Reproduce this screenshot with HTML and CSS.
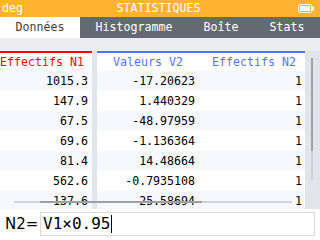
FILE: index.html
```html
<!DOCTYPE html>
<html>
<head>
<meta charset="utf-8">
<link rel="stylesheet" href="styles.css">
</head>
<body>
<div class="screen">
  <header class="topbar">
    <span class="angle">deg</span>
    <span class="title">STATISTIQUES</span>
    <span class="battery">
      <svg width="17" height="9" viewBox="0 0 17 9">
        <rect x="0.5" y="0.5" width="13" height="8" rx="1.5" fill="none" stroke="#fff"/>
        <rect x="2" y="2" width="10" height="5" fill="#fff"/>
        <rect x="14" y="2.5" width="2" height="4" fill="#fff"/>
      </svg>
    </span>
  </header>
  <nav class="tabs">
    <div class="tab tab-data active">Données</div>
    <div class="tab tab-histo">Histogramme</div>
    <div class="tab tab-box">Boîte</div>
    <div class="tab tab-stats">Stats</div>
  </nav>
  <main class="table-area">
    <div class="grid">
      <div class="col col1">
        <div class="head red">Effectifs N1</div>
        <div class="cell t">1015.3</div>
        <div class="cell">147.9</div>
        <div class="cell t">67.5</div>
        <div class="cell">69.6</div>
        <div class="cell t">81.4</div>
        <div class="cell">562.6</div>
        <div class="cell t">137.6</div>
      </div>
      <div class="sep"></div>
      <div class="group blue">
        <div class="col col2">
          <div class="head">Valeurs V2</div>
          <div class="cell t">-17.20623</div>
          <div class="cell">1.440329</div>
          <div class="cell t">-48.97959</div>
          <div class="cell">-1.136364</div>
          <div class="cell t">14.48664</div>
          <div class="cell">-0.7935108</div>
          <div class="cell t">25.58694</div>
        </div>
        <div class="col col3">
          <div class="head">Effectifs N2</div>
          <div class="cell t">1</div>
          <div class="cell">1</div>
          <div class="cell t">1</div>
          <div class="cell">1</div>
          <div class="cell t">1</div>
          <div class="cell">1</div>
          <div class="cell t">1</div>
        </div>
      </div>
      <div class="vscroll"><div class="vtrack"><div class="vthumb"></div></div></div>
    </div>
    <div class="hscroll"><div class="hthumb"></div></div>
  </main>
  <footer class="input-bar">
    <span class="label">N2=</span>
    <div class="field">V1×0.95<span class="caret"></span></div>
  </footer>
</div>
</body>
</html>
```

FILE: styles.css
```css
html, body {
  margin: 0;
  padding: 0;
  background: #fff;
}
.screen {
  width: 320px;
  height: 240px;
  overflow: hidden;
  display: flex;
  flex-direction: column;
  font-family: "DejaVu Sans Mono", monospace;
  font-size: 11.6px;
}
.topbar {
  height: 17px;
  background: #feb22f;
  color: #fff;
  display: grid;
  grid-template-columns: 1fr auto 1fr;
  align-items: center;
  padding: 0 5px 0 2px;
  line-height: 17px;
}
.title { text-align: center; }
.battery {
  justify-self: end;
  display: flex;
  align-items: center;
  padding-right: 0;
}
.battery svg { display: block; }
.tabs {
  height: 21px;
  display: flex;
  background: #646a74;
  color: #fff;
}
.tab {
  display: flex;
  align-items: center;
  justify-content: center;
  line-height: 21px;
}
.tab-data { width: 80px; }
.tab-histo { width: 108px; }
.tab-box { width: 66px; }
.tab-stats { width: 66px; }
.tab.active {
  background: #fff;
  color: #3c3c3c;
}
.table-area {
  position: relative;
  height: 171px;
  background: #ececf1;
  padding-top: 13px;
  box-sizing: border-box;
}
.grid {
  display: flex;
  height: 158px;
  overflow: hidden;
}
.col {
  display: flex;
  flex-direction: column;
  background: #fff;
}
.col1 {
  width: 100px;
  margin-left: -8px;
  flex: none;
}
.sep {
  width: 5px;
  flex: none;
  background: #e3e3ea;
}
.group {
  display: flex;
  border-top: 2px solid #5075f2;
  height: 156px;
  flex: none;
}
.col2 { width: 102px; }
.col3 { width: 106px; }
.head {
  height: 18px;
  line-height: 18px;
  text-align: center;
  color: #5075f2;
  background: #fff;
}
.col1 .head {
  color: #ff0000;
  border-top: 2px solid #ff0000;
}
.col3 .head { padding-left: 4px; }
.cell {
  height: 20px;
  line-height: 20px;
  text-align: right;
  color: #000;
  background: #fff;
  padding-right: 4px;
}
.cell.t { background: #f6f8fd; }
.col3 .cell { padding-right: 3px; }
.vscroll {
  width: 15px;
  flex: none;
  background: #e3e3ea;
  position: relative;
}
.vtrack {
  position: absolute;
  left: 6px;
  top: 7px;
  width: 2px;
  height: 122px;
  background: #d0d0d6;
}
.vthumb {
  width: 2px;
  height: 93px;
  background: #a2a2a6;
}
.hscroll {
  position: absolute;
  left: 14px;
  top: 163px;
  width: 278px;
  height: 2px;
  background: #d5d5d9;
}
.hthumb {
  margin-left: 26px;
  width: 162px;
  height: 2px;
  background: #a0a0a4;
}
.input-bar {
  flex: 1;
  display: flex;
  align-items: center;
  padding: 0 5px 2px 5px;
  background: #fff;
  font-size: 16px;
}
.label {
  width: 35px;
  color: #000;
  font-family: "DejaVu Sans", sans-serif;
  font-size: 15px;
}
.field {
  flex: 1;
  height: 22px;
  border: 1px solid #d9d9dc;
  display: flex;
  align-items: center;
  padding-left: 2px;
  color: #000;
}
.caret {
  display: inline-block;
  width: 1px;
  height: 18px;
  background: #000;
  margin-left: 1px;
}
```
